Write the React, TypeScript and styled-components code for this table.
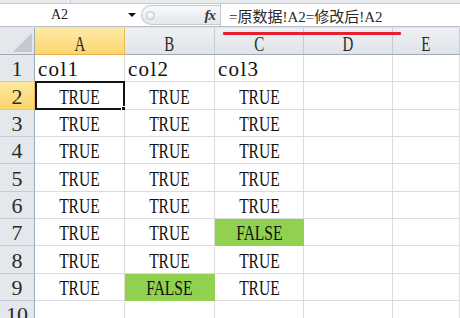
import React from "react";
import styled, { createGlobalStyle } from "styled-components";

const GlobalStyle = createGlobalStyle`
  html, body { margin: 0; padding: 0; background: #ffffff; }
  body { width: 460px; height: 318px; overflow: hidden; }
`;

const GREEN = "#92d050";
const GRID = "#dadcdf";
const HEAD_SEP = "#c6ccd3";
const HEAD_EDGE = "#9eaab7";

const Frame = styled.div`
  position: relative;
  width: 460px;
  height: 318px;
  overflow: hidden;
  display: flex;
  flex-direction: column;
  background: #fff;
  font-family: "Liberation Serif", "Noto Sans CJK SC", serif;
`;

const TopStrip = styled.div`
  flex: 0 0 3px;
  display: flex;
  background: #e9ecef;
`;

const StripPane = styled.div`
  flex: 0 0 70px;
  border-right: 1px solid #c5cbd2;
`;

const FormulaBar = styled.div`
  flex: 0 0 24px;
  box-sizing: border-box;
  display: flex;
  align-items: stretch;
  background: #fff;
  border-top: 1px solid #c3c9d1;
  border-bottom: 1px solid #b7bec8;
`;

const NameBox = styled.div`
  flex: 0 0 141px;
  display: flex;
  align-items: center;
`;

const NameText = styled.span`
  flex: 0 0 119px;
  text-align: center;
  font-size: 14px;
  color: #1a1a1a;
`;

const DropArrow = styled.span`
  margin-left: 9px;
  width: 0;
  height: 0;
  border-left: 4px solid transparent;
  border-right: 4px solid transparent;
  border-top: 4px solid #111;
`;

const FxPill = styled.div`
  flex: 0 0 79px;
  box-sizing: border-box;
  margin: 1px 0;
  display: flex;
  align-items: center;
  justify-content: space-between;
  padding: 0 5px 0 4px;
  border: 1px solid #c4c9d0;
  border-right: none;
  border-radius: 11px 0 0 11px;
  background: linear-gradient(#f8f9fa, #e4e7eb);
`;

const Dot = styled.span`
  width: 7px;
  height: 7px;
  border-radius: 50%;
  border: 1px solid #bcc2ca;
  background: radial-gradient(circle at 40% 35%, #ffffff, #d9dde2);
`;

const FxLabel = styled.span`
  font-family: "Liberation Serif", serif;
  font-style: italic;
  font-weight: bold;
  font-size: 15px;
  color: #3a3a3a;
  letter-spacing: -1px;
`;

const FormulaInput = styled.div`
  flex: 1;
  display: flex;
  align-items: center;
  padding-left: 8px;
  border-left: 1px solid #c4c9d0;
  font-family: "Liberation Serif", "Noto Sans CJK SC", serif;
  font-size: 15px;
  color: #2a2a2a;
  white-space: nowrap;
`;

const Spacer = styled.div`
  flex: 0 0 1px;
  background: #dfe3e8;
`;

const Sheet = styled.div`
  flex: 1;
  display: grid;
  grid-template-columns: 35px 90px 90px 89px 89px 1fr;
  grid-template-rows: 27px;
  grid-auto-rows: 27.33px;
`;

const Corner = styled.div`
  position: relative;
  box-sizing: border-box;
  background: #e4e8ec;
  border-right: 1px solid ${HEAD_EDGE};
  border-bottom: 1px solid ${HEAD_EDGE};
  &::after {
    content: "";
    position: absolute;
    right: 2px;
    bottom: 2px;
    width: 19px;
    height: 19px;
    background: #c3c8cf;
    clip-path: polygon(100% 0, 100% 100%, 0 100%);
  }
`;

const ColHeader = styled.div<{ $active?: boolean }>`
  box-sizing: border-box;
  display: flex;
  align-items: flex-end;
  justify-content: center;
  background: ${(p) =>
    p.$active ? "linear-gradient(#fee9a6, #fbd76f)" : "linear-gradient(#eef0f3, #e0e4e9)"};
  border-right: 1px solid ${(p) => (p.$active ? "#eeb650" : HEAD_SEP)};
  border-bottom: 1px solid ${(p) => (p.$active ? "#e7ad48" : HEAD_EDGE)};
  font-size: 22px;
  line-height: 20px;
  color: #2a2a2a;
`;

const RowHeader = styled.div<{ $active?: boolean }>`
  box-sizing: border-box;
  display: flex;
  align-items: flex-end;
  justify-content: center;
  padding-bottom: 1px;
  background: ${(p) => (p.$active ? "linear-gradient(#fee7a0, #fbd56c)" : "#e4e8ec")};
  border-right: 1px solid ${(p) => (p.$active ? "#eeb650" : HEAD_EDGE)};
  border-bottom: 1px solid ${HEAD_SEP};
  font-size: 22px;
  line-height: 22px;
  color: #2a2a2a;
`;

const Narrow = styled.span<{ $scale: number }>`
  display: inline-block;
  transform: scaleX(${(p) => p.$scale});
  transform-origin: center;
`;

const Cell = styled.div<{ $fill?: string; $align: "left" | "center" }>`
  position: relative;
  box-sizing: border-box;
  display: flex;
  align-items: flex-end;
  justify-content: ${(p) => (p.$align === "left" ? "flex-start" : "center")};
  padding: 0 0 1px ${(p) => (p.$align === "left" ? "3px" : "0")};
  background: ${(p) => p.$fill || "#fff"};
  border-right: 1px solid ${(p) => p.$fill || GRID};
  border-bottom: 1px solid ${(p) => p.$fill || GRID};
  font-size: 21px;
  line-height: 22px;
  color: #111;
  white-space: nowrap;
`;

const Label = styled.span`
  letter-spacing: 1.3px;
`;

const Selection = styled.div`
  position: absolute;
  top: -1px;
  left: 0;
  right: -1px;
  bottom: -1px;
  border: 2px solid #111;
  pointer-events: none;
`;

const Handle = styled.div`
  position: absolute;
  right: -3px;
  bottom: -3px;
  width: 5px;
  height: 5px;
  background: #111;
  border: 1px solid #fff;
  box-sizing: content-box;
  margin: -1px;
`;

const RedMark = styled.div`
  position: absolute;
  left: 223px;
  top: 32px;
  width: 178px;
  height: 2.5px;
  border-radius: 1px;
  background: #e3222b;
`;

type CellData = { text?: string; kind?: "label" | "value"; fill?: string };

const COLS = ["A", "B", "C", "D", "E"];

const buildRows = (): CellData[][] => {
  const out: CellData[][] = [];
  out.push([
    { text: "col1", kind: "label" },
    { text: "col2", kind: "label" },
    { text: "col3", kind: "label" },
    {},
    {},
  ]);
  for (let r = 2; r <= 9; r++) {
    const b: CellData = r === 9 ? { text: "FALSE", kind: "value", fill: GREEN } : { text: "TRUE", kind: "value" };
    const c: CellData = r === 7 ? { text: "FALSE", kind: "value", fill: GREEN } : { text: "TRUE", kind: "value" };
    out.push([{ text: "TRUE", kind: "value" }, b, c, {}, {}]);
  }
  out.push([{}, {}, {}, {}, {}]);
  return out;
};

const ROWS = buildRows();

export default function App() {
  return (
    <>
      <GlobalStyle />
      <Frame>
        <TopStrip>
          <StripPane />
        </TopStrip>
        <FormulaBar>
          <NameBox>
            <NameText>A2</NameText>
            <DropArrow />
          </NameBox>
          <FxPill>
            <Dot />
            <FxLabel>fx</FxLabel>
          </FxPill>
          <FormulaInput>=原数据!A2=修改后!A2</FormulaInput>
        </FormulaBar>
        <Spacer />
        <Sheet>
          <Corner />
          {COLS.map((c) => (
            <ColHeader key={c} $active={c === "A"}>
              <Narrow $scale={0.68}>{c}</Narrow>
            </ColHeader>
          ))}
          {ROWS.map((row, ri) => (
            <React.Fragment key={ri}>
              <RowHeader $active={ri === 1}>{ri + 1}</RowHeader>
              {row.map((cell, ci) => (
                <Cell key={ci} $fill={cell.fill} $align={cell.kind === "label" ? "left" : "center"}>
                  {cell.kind === "label" && <Label>{cell.text}</Label>}
                  {cell.kind === "value" && <Narrow $scale={0.74}>{cell.text}</Narrow>}
                  {ri === 1 && ci === 0 && (
                    <>
                      <Selection />
                      <Handle />
                    </>
                  )}
                </Cell>
              ))}
            </React.Fragment>
          ))}
        </Sheet>
        <RedMark />
      </Frame>
    </>
  );
}
